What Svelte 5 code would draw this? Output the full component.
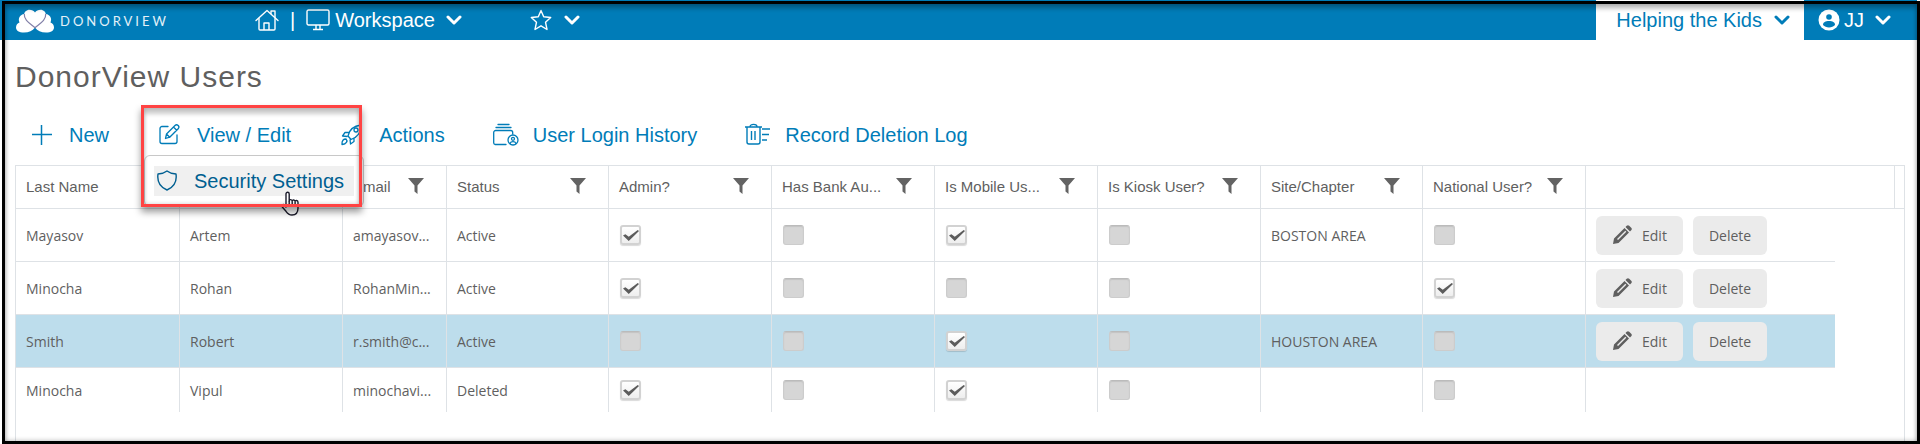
<script>
	const columns = [
		{ title: 'Last Name', width: 164 },
		{ title: '', width: 163 },
		{ title: 'Email', width: 104 },
		{ title: 'Status', width: 162 },
		{ title: 'Admin?', width: 163 },
		{ title: 'Has Bank Au...', width: 163 },
		{ title: 'Is Mobile Us...', width: 163 },
		{ title: 'Is Kiosk User?', width: 163 },
		{ title: 'Site/Chapter', width: 162 },
		{ title: 'National User?', width: 163 }
	];

	const users = [
		{ last: 'Mayasov', first: 'Artem', email: 'amayasov...', status: 'Active', admin: true, bank: false, mobile: true, kiosk: false, site: 'BOSTON AREA', national: false },
		{ last: 'Minocha', first: 'Rohan', email: 'RohanMin...', status: 'Active', admin: true, bank: false, mobile: false, kiosk: false, site: '', national: true },
		{ last: 'Smith', first: 'Robert', email: 'r.smith@c...', status: 'Active', admin: false, bank: false, mobile: true, kiosk: false, site: 'HOUSTON AREA', national: false },
		{ last: 'Minocha', first: 'Vipul', email: 'minochavi...', status: 'Deleted', admin: true, bank: false, mobile: true, kiosk: false, site: '', national: false }
	];

	let selected = $state(2);
</script>

{#snippet chevron()}
	<svg width="16" height="10" viewBox="0 0 16 10"><path d="M2 2l6 6 6-6" fill="none" stroke="currentColor" stroke-width="3" stroke-linecap="round" stroke-linejoin="round" /></svg>
{/snippet}

{#snippet check(label, checked)}
	<td><input type="checkbox" aria-label={label} {checked} /></td>
{/snippet}

<div class="page">
	<header class="topbar">
		<a class="brand" href="#home">
			<svg width="38" height="24" viewBox="0 0 38 24">
				<path d="M8 23.500C3 23.500 0 21.500 0 18.500c0-2.500 1.500-4.500 3.500-5C1.500 9 4.500 5.500 8 5l11 13.500C16.500 22 13 23.500 8 23.500z" fill="#fff" />
				<path d="M30 23.500c5 0 8-2 8-5 0-2.500-1.500-4.500-3.500-5C36.500 9 33.500 5.500 30 5L19 18.500C21.500 22 25 23.500 30 23.500z" fill="#fff" />
				<path d="M19 20.500L16 23h6z" fill="#007cb8" />
				<path d="M19 19C12.500 14.500 8 11 8 6.500 8 3 10.500.8 13.500.8c2.300 0 4.300 1 5.500 2.700C20.200 1.800 22.200.8 24.500.8c3 0 5.500 2.200 5.500 5.700 0 4.500-4.500 8-11 12.500z" fill="#fff" />
				<path d="M8.300 5C7.700 11 14 14.500 19 18.700 24 14.500 30.300 11 29.700 5" fill="none" stroke="#8280a8" stroke-width="1.200" />
			</svg>
			<span>DONORVIEW</span>
		</a>
		<nav class="menus">
			<a class="home" href="#home" aria-label="Home">
				<svg width="24" height="22" viewBox="0 0 24 22" fill="none" stroke="currentColor" stroke-width="1.400" stroke-linejoin="round" stroke-linecap="round">
					<path d="M1 11.500L12 1.500l11 10" />
					<path d="M4 9.500V20a1 1 0 001 1h14a1 1 0 001-1V9.500M9 21v-7h5v7M16 4.500V2h4v6.500" />
				</svg>
			</a>
			<span class="divider">|</span>
			<button class="workspace">
				<svg width="24" height="22" viewBox="0 0 24 22" fill="none" stroke="currentColor" stroke-width="1.400">
					<rect x="1" y="1" width="22" height="15" rx="1.500" />
					<path d="M10 16v4M14 16v4M7 20.500h10" />
				</svg>
				<span>Workspace</span>
				{@render chevron()}
			</button>
			<button class="favorites" aria-label="Favorites">
				<svg width="22" height="22" viewBox="0 0 22 22" fill="none" stroke="currentColor" stroke-width="1.400" stroke-linejoin="round">
					<path d="M11 1.500l2.700 6.300 7 .7-5.200 4.700 1.500 7.300-6-3.700-6 3.700 1.500-7.300L1.300 8.500l7-.7z" />
				</svg>
				{@render chevron()}
			</button>
		</nav>
		<button class="org">
			<span>Helping the Kids</span>
			{@render chevron()}
		</button>
		<button class="account">
			<svg width="22" height="22" viewBox="0 0 22 22">
				<circle cx="11" cy="11" r="10.500" fill="currentColor" />
				<circle cx="11" cy="8" r="2.800" fill="#007cb8" />
				<path d="M5 16c0-3 2.500-4 6-4s6 1 6 4c-1.500 1.500-3.500 2.500-6 2.500S6.500 17.500 5 16z" fill="#007cb8" />
			</svg>
			<span>JJ</span>
			{@render chevron()}
		</button>
	</header>

	<h1>DonorView Users</h1>

	<div class="toolbar">
		<button>
			<svg width="28" height="24" viewBox="0 0 28 24" fill="none" stroke="currentColor" stroke-width="1.500"><path d="M3 11.500h20M12.500 2v20" /></svg>
			New
		</button>
		<div class="dropdown">
			<button>
				<svg width="28" height="24" viewBox="0 0 28 24" fill="none" stroke="currentColor" stroke-width="1.300" stroke-linejoin="round" stroke-linecap="round">
					<path d="M11 3.500H5A2 2 0 003 5.500v13a2 2 0 002 2h13a2 2 0 002-2V12" />
					<path d="M8.500 15.500l1-4.500 8.500-8.500c1-1 2.300-.8 3.200 0 .9 1 1 2.200 0 3.200l-8.500 8.500zM16.500 4l3.200 3.200M9.500 11l3.200 3.200" />
				</svg>
				View / Edit
			</button>
			<div class="menu">
				<button>
					<svg width="24" height="24" viewBox="0 0 24 24" fill="none" stroke="currentColor" stroke-width="1.400" stroke-linejoin="round"><path d="M11 2c2.500 2 5.500 2.800 9 3 1 7-2 13-9 16C4 18 1 12 2 5c3.500-.2 6.500-1 9-3z" /></svg>
					Security Settings
				</button>
				<svg class="cursor" width="20" height="26" viewBox="0 0 20 26">
					<path d="M5 16V3c0-2.300 3.200-2.300 3.200 0v7c0-2 3-1.800 3 .2 0-1.800 2.900-1.600 2.900.4 0-1.600 2.900-1.400 2.900.6v5.800c0 4-2 7-6 7-3 0-4.500-1.500-6-3.700L1.300 16c-1.300-2 .9-3.200 2.200-1.800z" fill="#fff" stroke="#1b1b2b" stroke-width="1.400" stroke-linejoin="round" />
					<path d="M8.200 10v4M11.200 10.500V14M14.100 11v3" stroke="#1b1b2b" stroke-width="1.400" />
				</svg>
			</div>
			<div class="highlight"></div>
		</div>
		<button>
			<svg width="28" height="24" viewBox="0 0 28 24" fill="none" stroke="currentColor" stroke-width="1.300" stroke-linejoin="round">
				<path d="M9 13c1-5 5-10 13-11 .3 8-4.500 12.500-10 14.500zM10 9.500H6L3.500 13l5 .5M15 15v3.500L11.500 21l-.5-4.500" />
				<path d="M3 21.500c-.3-4 1.500-5.500 4-5.500 2 2 .5 5-4 5.500z" />
				<circle cx="17" cy="7" r="2" />
			</svg>
			Actions
		</button>
		<button>
			<svg width="28" height="24" viewBox="0 0 28 24" fill="none" stroke="currentColor" stroke-width="1.300" stroke-linecap="round">
				<path d="M5 1.500h11M3 4.500h15M13 21.500H2A2 2 0 010.700 19.500V9.500a2 2 0 012-2h15a2 2 0 012 2V11" />
				<circle cx="20" cy="17" r="5" />
				<circle cx="20" cy="15.800" r="1.500" />
				<path d="M17 20.500c1-2.500 5-2.500 6 0" />
			</svg>
			User Login History
		</button>
		<button>
			<svg width="28" height="24" viewBox="0 0 28 24" fill="none" stroke="currentColor" stroke-width="1.400">
				<path d="M0 4h17M5 4c0-3.500 7-3.500 7 0M2 4v15a2 2 0 002 2h9a2 2 0 002-2V4M6.500 8v9M10 8v9" />
				<path d="M17 6h8M17 11.500h7M17 17h5" />
			</svg>
			Record Deletion Log
		</button>
	</div>

	<div class="grid">
		<table>
			<colgroup>
				{#each columns as col}
					<col style:width="{col.width}px" />
				{/each}
				<col class="actions-col" />
				<col />
				<col class="end-col" />
			</colgroup>
			<thead>
				<tr>
					{#each columns as col}
						<th>
							{#if col.title}
								<div class="head">
									<span>{col.title}</span>
									<svg width="16" height="16" viewBox="0 0 16 16"><path d="M0 0h16L9.500 7.500V16l-3-2.500v-6z" fill="#636363" /></svg>
								</div>
							{/if}
						</th>
					{/each}
					<th colspan="2"></th>
					<th></th>
				</tr>
			</thead>
			<tbody>
				{#each users as user, i}
					<tr class:selected={i === selected} onclick={() => (selected = i)}>
						<td>{user.last}</td>
						<td>{user.first}</td>
						<td>{user.email}</td>
						<td>{user.status}</td>
						{@render check('Admin', user.admin)}
						{@render check('Has bank authorization', user.bank)}
						{@render check('Is mobile user', user.mobile)}
						{@render check('Is kiosk user', user.kiosk)}
						<td>{user.site}</td>
						{@render check('National user', user.national)}
						<td class="commands">
							{#if user.status === 'Active'}
								<div class="buttons">
									<button>
										<svg width="20" height="20" viewBox="0 0 20 20" fill="#5f5f5f">
											<path fill-rule="evenodd" d="M1 19l1-5.500L12.500 3 17 7.500 6.500 18zM5 14l1 1L14.300 6.700l-1-1z" />
											<path d="M13.500 2l1.200-1.200c.8-.8 1.700-.8 2.500 0l2 2c.8.8.8 1.700 0 2.500L18 6.500z" />
										</svg>
										Edit
									</button>
									<button>Delete</button>
								</div>
							{/if}
						</td>
					</tr>
				{/each}
			</tbody>
		</table>
	</div>
	<div class="frame"></div>
</div>

<style>
	:global(body) {
		background: #fff;
	}
	.page {
		position: relative;
		display: flex;
		flex-direction: column;
		min-height: 100vh;
		box-sizing: border-box;
		padding-right: 3px;
		font-family: "Liberation Sans", Arial, sans-serif;
		color: #5f5f5f;
		overflow: hidden;
	}
	button {
		display: flex;
		align-items: center;
		border: 0;
		padding: 0;
		background: none;
		font: inherit;
		color: inherit;
		white-space: nowrap;
		cursor: pointer;
	}
	svg {
		display: block;
		flex: none;
	}
	.topbar {
		display: flex;
		height: 40px;
		background: #007cb8;
		color: #fff;
		font-size: 20px;
	}
	.brand {
		display: flex;
		align-items: center;
		gap: 6px;
		width: 240px;
		box-sizing: border-box;
		padding: 2px 0 0 16px;
		color: #e3f1f8;
		font-family: Lato, sans-serif;
		font-size: 13px;
		letter-spacing: 3px;
		text-decoration: none;
	}
	.menus {
		display: flex;
		align-items: center;
		flex: 1;
		padding-left: 15px;
	}
	.home {
		color: inherit;
	}
	.divider {
		margin: 0 11px;
	}
	.workspace span {
		margin: 0 11px 0 5px;
	}
	.favorites {
		gap: 12px;
		margin-left: 68px;
	}
	.org {
		gap: 12px;
		padding: 0 14px 0 20px;
		background: #fff;
		color: #007cb8;
	}
	.account {
		padding: 0 26px 0 14px;
	}
	.account span {
		margin: 0 11px 0 4px;
	}
	h1 {
		margin: 19px 15px 0;
		font-size: 30px;
		line-height: 36px;
		font-weight: 400;
		letter-spacing: 1px;
	}
	.toolbar {
		display: flex;
		gap: 48px;
		padding: 25px 29px 15px;
		font-size: 20px;
		line-height: 30px;
		color: #007cb8;
	}
	.toolbar button {
		gap: 12px;
	}
	.dropdown {
		position: relative;
	}
	.menu {
		position: absolute;
		top: 35px;
		left: -13px;
		z-index: 1;
		padding: 10px 9px;
		border: 1px solid #c8c8c8;
		border-radius: 6px;
		background: #fff;
	}
	.menu button {
		gap: 14px;
		width: 200px;
		box-sizing: border-box;
		padding-left: 2px;
		background: #f0f0f0;
		color: #005f91;
	}
	.cursor {
		position: absolute;
		left: 136px;
		top: 35px;
	}
	.highlight {
		position: absolute;
		top: -15px;
		left: -16px;
		z-index: 2;
		width: 215px;
		height: 96px;
		border: 3px solid #ff4343;
		box-shadow: 0 5px 7px rgba(0, 0, 0, 0.4), inset 0 6px 4px rgba(0, 0, 0, 0.2), inset 0 0 4px rgba(0, 0, 0, 0.2);
		pointer-events: none;
	}
	.grid {
		flex: 1;
		margin: 0 12px 0 15px;
		border: 1px solid #dee2e6;
		border-bottom: 0;
	}
	table {
		table-layout: fixed;
		width: 100%;
		border-collapse: separate;
		border-spacing: 0;
		font-size: 15px;
	}
	.actions-col {
		width: 249px;
	}
	.end-col {
		width: 9px;
	}
	th,
	td {
		box-sizing: border-box;
		padding: 0 10px;
		border-right: 1px solid #dee2e6;
		border-bottom: 1px solid #dee2e6;
		text-align: left;
		font-weight: 400;
		white-space: nowrap;
	}
	th {
		height: 43px;
		padding-bottom: 2px;
	}
	th:last-child {
		padding: 0;
		border-right: 0;
	}
	.head {
		display: flex;
		align-items: center;
		justify-content: space-between;
		padding-right: 12px;
	}
	td {
		height: 53px;
		font-family: "Open Sans", "Noto Sans", sans-serif;
		font-size: 14px;
	}
	tbody tr:last-child td {
		height: 44px;
		border-bottom: 0;
	}
	td.commands {
		border-right: 0;
	}
	.selected td {
		background: #bdddec;
	}
	.buttons {
		display: flex;
		gap: 10px;
	}
	.buttons button {
		gap: 10px;
		height: 39px;
		padding: 0 16px;
		border-radius: 6px;
		background: #ebebeb;
	}
	input {
		display: block;
		position: relative;
		width: 21px;
		height: 20px;
		margin: 0 0 0 1px;
		appearance: none;
		border: 1px solid #ccc;
		border-top-color: #bbb;
		border-radius: 3px;
		background: #d6d6d6;
		box-shadow: inset 0 1px 1px #c4c4c4;
	}
	input:checked {
		border: 2px solid #d2d2d2;
		background: linear-gradient(#fff, #eee);
		box-shadow: 0 1px 1px rgba(0, 0, 0, 0.15);
	}
	input:checked::after {
		content: "";
		position: absolute;
		left: 1px;
		top: 3px;
		width: 16px;
		height: 11px;
		background: #5c5c5c;
		clip-path: polygon(0 50%, 15% 38%, 36% 62%, 92% 0, 100% 8%, 36% 100%);
	}
	.frame {
		position: absolute;
		inset: 1px 0 0 2px;
		z-index: 3;
		border: 3px solid #000;
		box-shadow: inset 0 5px 4px rgba(0, 0, 0, 0.2), inset 0 0 5px rgba(0, 0, 0, 0.3);
		pointer-events: none;
	}
</style>
